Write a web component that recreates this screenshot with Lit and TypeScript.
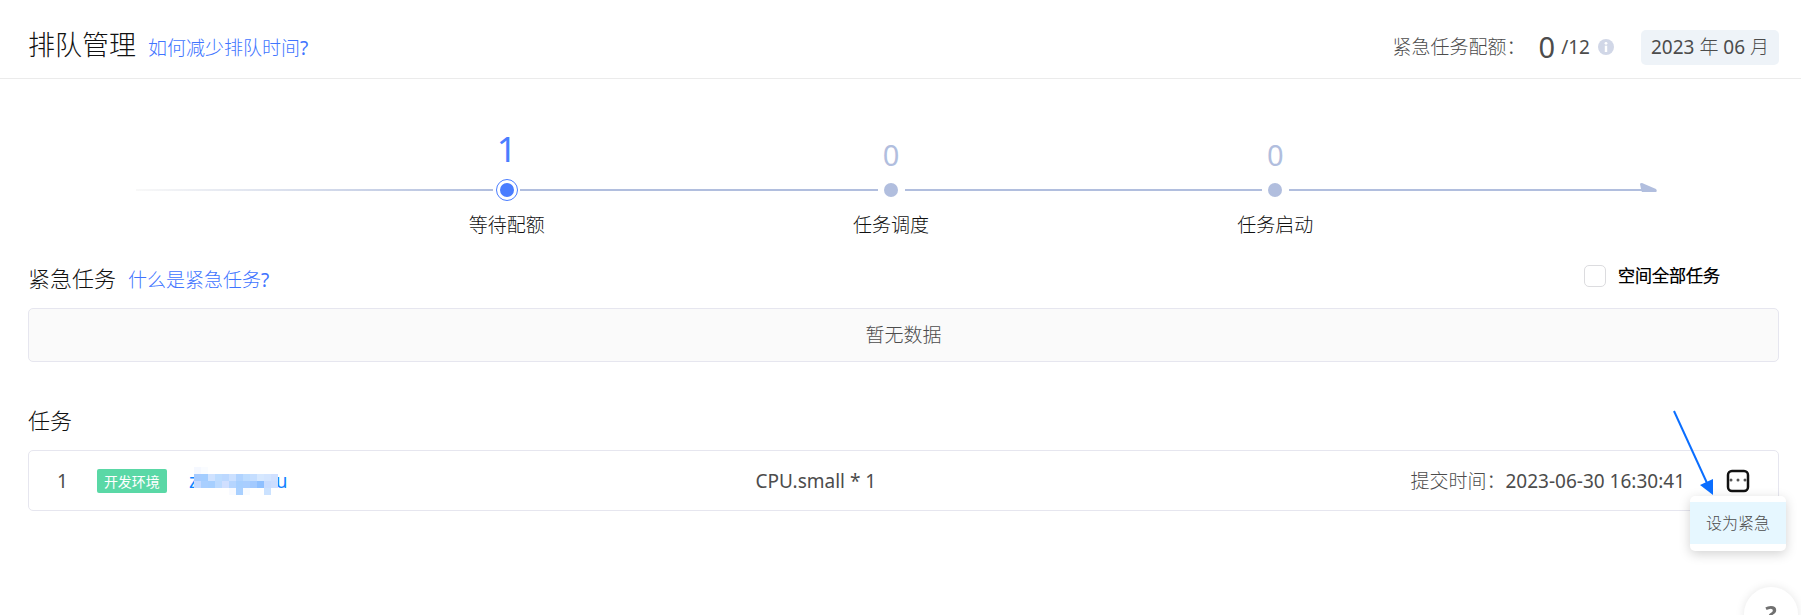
import { LitElement, html, css, svg } from "lit";
import { customElement, state } from "lit/decorators.js";

interface Step {
  name: string;
  count: number;
}

const STEPS: Step[] = [
  { name: "等待配额", count: 1 },
  { name: "任务调度", count: 0 },
  { name: "任务启动", count: 0 },
];

// Colours of the mosaic that hides the task name, one list per row of 7px cells.
const MOSAIC: string[][] = [
  ["#f5f8ff", "#fafcff"],
  ["#a6cbff", "#a3cdff", "#cfe2ff", "#bddcff", "#bcd8ff", "#cbe0ff", "#b0d3ff", "#bddcff", "#c5deff", "#d6e8ff", "#d3e5ff", "#d0e0ff"],
  ["#c6daff", "#a9cfff", "#a6cfff", "#bcdaff", "#d0dfff", "#b5d5ff", "#a6cfff", "#a9ceff", "#a3caff", "#8fc0ff", "#c8dcff", "#cddeff"],
  ["", "", "", "", "", "#f8faff", "#a9d0ff", "#f8fbff", "", "", "#cbe2ff", ""],
];

@customElement("queue-steps")
export class QueueSteps extends LitElement {
  static styles = css`
    :host {
      display: block;
    }
    .steps {
      display: flex;
      list-style: none;
      margin: 0;
      padding: 0;
    }
    .step {
      flex: 24;
      display: grid;
      grid-template-columns: 1fr 27px;
      grid-template-rows: 50px 26px 44px;
      align-items: center;
    }
    .line {
      grid-row: 2;
      height: 2px;
      background: #b1bede;
    }
    .step:first-child .line {
      background: linear-gradient(to right, #f8f8f8, #b1bede);
    }
    .count,
    .dot,
    .name {
      grid-column: 2;
      justify-self: center;
    }
    .count {
      grid-row: 1;
      align-self: end;
      font-size: 29px;
      line-height: 44px;
      color: #b1bede;
    }
    .dot {
      grid-row: 2;
      width: 14px;
      height: 14px;
      border-radius: 50%;
      background: #b1bede;
    }
    .name {
      grid-row: 3;
      white-space: nowrap;
      font-size: 19px;
      line-height: 28px;
      color: #111;
    }
    .active .count {
      font-size: 35px;
      line-height: 56px;
      color: #4a7dff;
    }
    .active .dot {
      background: #4a7dff;
      border: 3px solid #fff;
      outline: 1px solid #4a7dff;
    }
    .tail {
      flex: 23;
      display: flex;
      align-items: center;
      height: 26px;
      margin-top: 50px;
    }
    .tail-line {
      flex: 1;
      height: 2px;
      background: #b1bede;
    }
    .tip {
      display: block;
      width: 17px;
      height: 14px;
    }
  `;

  render() {
    return html`<ol class="steps">
      ${STEPS.map(
        (s) => html`<li class="step ${s.count > 0 ? "active" : ""}">
          <span class="line"></span>
          <span class="count">${s.count}</span>
          <span class="dot"></span>
          <span class="name">${s.name}</span>
        </li>`
      )}
      <li class="tail" aria-hidden="true">
        <span class="tail-line"></span>
        <svg class="tip" viewBox="0 0 17 14">
          <path d="M0 1 Q0 0 2 0 L16 6 Q17.500 8 16 9 H2 L1.500 8 H0 V6 H1 Z" fill="#b1bede" />
        </svg>
      </li>
    </ol>`;
  }
}

@customElement("app-root")
export class AppRoot extends LitElement {
  @state() private showAll = false;

  static styles = css`
    :host {
      display: block;
      min-height: 100vh;
      overflow: hidden;
      box-sizing: border-box;
      background: #fff;
      color: #4c4c4c;
      font: 19px/28px "Noto Sans", "Noto Sans CJK SC Light", "Noto Sans CJK SC", sans-serif;
    }
    button {
      font: inherit;
      color: inherit;
      border: 0;
      padding: 0;
      background: none;
      cursor: pointer;
    }
    a {
      color: #4074ff;
      text-decoration: none;
    }
    h1,
    h2 {
      margin: 0;
      font-weight: 400;
      color: #111;
    }
    h1 {
      font-size: 27px;
      line-height: 40px;
    }
    h2 {
      font-size: 22px;
      line-height: 32px;
    }
    .header {
      display: flex;
      justify-content: space-between;
      align-items: center;
      height: 78px;
      padding: 0 22px 0 28px;
      border-bottom: 1px solid #ebebeb;
    }
    .quota,
    .section-head,
    .all,
    .task-main,
    .task-end {
      display: flex;
      align-items: center;
    }
    .title {
      display: flex;
      align-items: baseline;
      gap: 12px;
    }
    .header .title {
      padding-top: 12px;
    }
    .quota {
      padding-top: 16px;
    }
    .used {
      font-size: 29px;
      margin: 0 6px 0 13px;
    }
    .info {
      display: block;
      width: 16px;
      height: 16px;
      margin: 0 27px 0 8px;
    }
    .month {
      height: 35px;
      padding: 0 10px;
      border-radius: 5px;
      background: #eef3f8;
    }
    .steps {
      padding: 48px 144px 0 136px;
    }
    .section {
      padding: 0 22px 0 28px;
    }
    .section + .section {
      margin-top: 28px;
    }
    .section-head {
      height: 60px;
    }
    .steps + .section {
      padding-top: 1px;
    }
    .all {
      gap: 12px;
      margin: 0 59px 0 auto;
      padding-bottom: 4px;
      font-size: 17px;
      font-weight: 700;
      color: #000;
    }
    .box {
      appearance: none;
      width: 22px;
      height: 22px;
      margin: 0;
      border: 1px solid #dcdcdf;
      border-radius: 5px;
      background: #fff;
    }
    .box:checked {
      background: #4a7dff;
    }
    .empty {
      margin: 0;
      padding: 12px 0;
      text-align: center;
      border: 1px solid #e6e6ef;
      border-radius: 5px;
      background: #fafafa;
    }
    .tasks {
      list-style: none;
      margin: 0;
      padding: 0;
    }
    .task {
      display: grid;
      grid-template-columns: 16fr 15fr auto;
      align-items: center;
      height: 59px;
      padding: 0 28px;
      border: 1px solid #e6e6ef;
      border-radius: 5px;
    }
    .tag {
      margin: 0 22px 0 29px;
      padding: 0 7px;
      border-radius: 2px;
      background: #5ad8a6;
      color: #fff;
      font-family: "Noto Sans CJK SC", sans-serif;
      font-size: 14px;
      line-height: 24px;
    }
    .task-link {
      display: flex;
      align-items: center;
      color: #1183ff;
    }
    .mosaic {
      display: block;
      position: relative;
      width: 84px;
      height: 28px;
      margin: 0 -2px 0 -4px;
    }
    .menu-wrap {
      position: relative;
      margin-left: 41px;
    }
    .more,
    .more-icon {
      display: block;
      width: 24px;
      height: 24px;
    }
    .menu {
      position: absolute;
      top: 27px;
      right: -36px;
      padding: 6px 0 7px;
      border-radius: 5px;
      background: #fff;
      box-shadow: 0 3px 12px rgba(0, 0, 0, 0.18);
    }
    .menu-item {
      display: block;
      padding: 0 16px;
      background: #e6f7ff;
      font-size: 16px;
      line-height: 42px;
      white-space: nowrap;
    }
    .pointer {
      position: absolute;
      right: 36px;
      bottom: -4px;
      width: 42px;
      height: 88px;
      pointer-events: none;
    }
    .help {
      position: fixed;
      right: 3px;
      bottom: -26px;
      width: 54px;
      height: 54px;
      border-radius: 50%;
      background: #fff;
      box-shadow: 0 0 10px rgba(0, 0, 0, 0.1);
      color: #707070;
      font-size: 24px;
      font-weight: 700;
    }
  `;

  private mosaic() {
    return svg`<svg class="mosaic" viewBox="0 0 84 28" shape-rendering="crispEdges" aria-hidden="true">
      ${MOSAIC.map((row, y) =>
        row.map((c, x) => (c ? svg`<rect x=${x * 7} y=${y * 7} width="7" height="7" fill=${c} />` : ""))
      )}
    </svg>`;
  }

  render() {
    return html`
      <header class="header">
        <div class="title">
          <h1>排队管理</h1>
          <a href="#reduce">如何减少排队时间?</a>
        </div>
        <div class="quota">
          <span>紧急任务配额：</span>
          <span class="used">0</span>
          <span>/12</span>
          <svg class="info" viewBox="0 0 16 16" aria-hidden="true">
            <circle cx="8" cy="8" r="8" fill="#d1d7e7" />
            <circle cx="8" cy="4.300" r="1.400" fill="#fff" />
            <path d="M6.800 6.700H9.200V13H6.800Z" fill="#fff" />
          </svg>
          <button class="month" type="button">2023 年 06 月</button>
        </div>
      </header>
      <main>
        <queue-steps class="steps"></queue-steps>
        <section class="section">
          <div class="section-head">
            <div class="title">
              <h2>紧急任务</h2>
              <a href="#urgent">什么是紧急任务?</a>
            </div>
            <label class="all">
              <input
                class="box"
                type="checkbox"
                .checked=${this.showAll}
                @change=${(e: Event) => (this.showAll = (e.target as HTMLInputElement).checked)}
              />
              空间全部任务
            </label>
          </div>
          <p class="empty">暂无数据</p>
        </section>
        <section class="section">
          <div class="section-head"><h2>任务</h2></div>
          <ul class="tasks">
            <li class="task">
              <div class="task-main">
                <span>1</span>
                <span class="tag">开发环境</span>
                <a class="task-link" href="#task">z${this.mosaic()}u</a>
              </div>
              <span>CPU.small * 1</span>
              <div class="task-end">
                <span>提交时间：2023-06-30 16:30:41</span>
                <div class="menu-wrap">
                  <button class="more" type="button" aria-label="更多">
                    <svg class="more-icon" viewBox="0 0 24 24">
                      <rect x="2" y="2" width="20" height="20" rx="4" fill="none" stroke="#111" stroke-width="2.500" />
                      <g fill="#555">
                        <circle cx="5" cy="11" r="1.500" />
                        <circle cx="12" cy="11" r="1.500" />
                        <circle cx="19" cy="11" r="1.500" />
                      </g>
                    </svg>
                  </button>
                  <div class="menu">
                    <button class="menu-item" type="button">设为紧急</button>
                  </div>
                  <svg class="pointer" viewBox="0 0 42 88" aria-hidden="true">
                    <path d="M2 2 L35 74" stroke="#0a6eff" stroke-width="2" />
                    <path d="M41 86 L28 76 L41 70 Z" fill="#0a6eff" />
                  </svg>
                </div>
              </div>
            </li>
          </ul>
        </section>
      </main>
      <button class="help" type="button">?</button>
    `;
  }
}
